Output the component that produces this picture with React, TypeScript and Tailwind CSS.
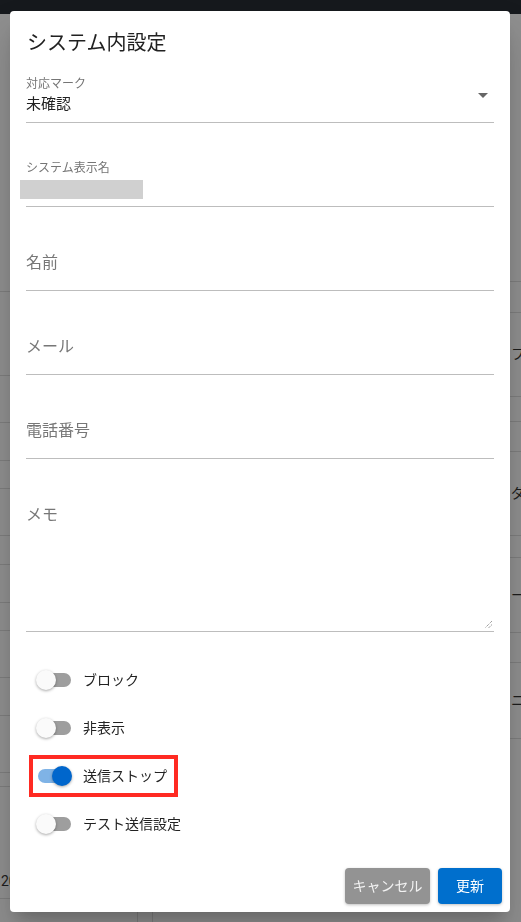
import { useState } from 'react';

const leftRows = [
  'h-[278px]', 'h-[84px]', 'h-[47px]', 'h-[38px]', 'h-[28px]', 'h-[47px]', 'h-[29px]',
  'h-[38px]', 'h-[28px]', 'h-[47px]', 'h-[38px]', 'h-[57px]', 'h-[14px]', 'h-[112px]',
];

const rightRows: { h: string; text?: string }[] = [
  { h: 'h-[268px]' },
  { h: 'h-[31px]' },
  { h: 'h-[84px]', text: 'フォーム' },
  { h: 'h-[25px]' },
  { h: 'h-[30px]' },
  { h: 'h-[84px]', text: 'ダイレクト' },
  { h: 'h-[22px]' },
  { h: 'h-[75px]', text: 'ーム' },
  { h: 'h-[30px]' },
  { h: 'h-[76px]', text: 'ニュース' },
];

function Background() {
  return (
    <div className="min-h-screen bg-[#8f8f8f]">
      <div className="h-[14px] bg-[#16191d]" />
      <div className="flex h-[908px]">
        <div className="w-[138px] border-r border-[#7d7d7d]">
          {leftRows.map((h, i) => (
            <div key={i} className={`${h} border-b border-[#7d7d7d] flex items-end`}>
              {i === leftRows.length - 1 && (
                <span className="pl-[1px] pb-[6px] text-[14px] text-[#1c1c1c]">2020/01/01</span>
              )}
            </div>
          ))}
        </div>
        <div className="w-[15px] border-r border-[#7d7d7d]" />
        <div className="flex-1 overflow-hidden">
          {rightRows.map((r, i) => (
            <div key={i} className={`${r.h} border-b border-[#7d7d7d] flex items-center`}>
              {r.text && (
                <span className="ml-[358px] whitespace-nowrap text-[14px] text-[#1c1c1c]">{r.text}</span>
              )}
            </div>
          ))}
        </div>
      </div>
    </div>
  );
}

function Toggle({ label, checked, onChange, marked }: {
  label: string;
  checked: boolean;
  onChange: () => void;
  marked?: boolean;
}) {
  return (
    <div className="relative h-[48px] flex items-center">
      <button onClick={onChange} className="relative w-[57px] h-[38px] shrink-0">
        <span
          className={`absolute left-[12px] top-[12px] w-[33px] h-[14px] rounded-full ${
            checked ? 'bg-[#7fb3e6]' : 'bg-[#9e9e9e]'
          }`}
        />
        <span
          className={`absolute top-[9px] w-[20px] h-[20px] rounded-full shadow-[0_1px_3px_rgba(0,0,0,0.35)] ${
            checked ? 'left-[26px] bg-[#0066cc]' : 'left-[10px] bg-[#fafafa]'
          }`}
        />
      </button>
      <span className="text-[14px] text-[#222]">{label}</span>
      {marked && (
        <div className="absolute left-[3px] top-[3px] w-[149px] h-[42px] border-[4px] border-[#ff2a22]" />
      )}
    </div>
  );
}

export default function App() {
  const [toggles, setToggles] = useState({ block: false, hidden: false, stop: true, test: false });
  const flip = (k: keyof typeof toggles) => setToggles({ ...toggles, [k]: !toggles[k] });

  return (
    <div className="relative font-[Roboto,'Noto_Sans_CJK_JP',sans-serif]">
      <Background />

      <div className="fixed inset-0 pl-[10px] pt-[11px]">
        <div className="w-[500px] h-[901px] bg-white rounded-[4px] shadow-[0_11px_15px_-7px_rgba(0,0,0,0.2),0_24px_38px_3px_rgba(0,0,0,0.14)] flex flex-col">
          <h2 className="px-[17px] pt-[16px] h-[48px] text-[20px] leading-[32px] text-[#212121]">
            システム内設定
          </h2>

          <div className="px-[16px] flex-1">
            {/* 対応マーク */}
            <div className="mt-[18px] pb-[8px] border-b border-[#bdbdbd]">
              <div className="h-[14px] text-[12px] leading-[14px] text-[#757575]">対応マーク</div>
              <div className="relative mt-[3px] h-[20px] text-[15px] leading-[20px] text-[#212121]">
                未確認
                <svg viewBox="0 0 24 24" className="absolute right-[-1px] top-[-11px] w-[24px] h-[24px]">
                  <path d="M7 10l5 5 5-5z" fill="#666" />
                </svg>
              </div>
            </div>

            {/* システム表示名 */}
            <div className="mt-[38px] pb-[7px] border-b border-[#bdbdbd]">
              <div className="h-[14px] text-[12px] leading-[14px] text-[#757575]">システム表示名</div>
              <div className="mt-[5px] -ml-[6px] w-[123px] h-[19px] bg-[#d0d0d0]" />
            </div>

            {['名前', 'メール', '電話番号'].map((p) => (
              <div key={p} className="mt-[44px] pb-[15px] border-b border-[#bdbdbd]">
                <div className="h-[24px] text-[16px] leading-[24px] text-[#777]">{p}</div>
              </div>
            ))}

            {/* メモ */}
            <div className="relative mt-[44px] pb-[104px] border-b border-[#bdbdbd]">
              <div className="h-[24px] text-[16px] leading-[24px] text-[#777]">メモ</div>
              <svg viewBox="0 0 9 9" className="absolute right-[1px] bottom-[2px] w-[9px] h-[9px]">
                <path d="M8 1L1 8M8 4.5L4.5 8" stroke="#777" strokeWidth="1" strokeDasharray="1 1" />
              </svg>
            </div>

            <div className="mt-[24px]">
              <Toggle label="ブロック" checked={toggles.block} onChange={() => flip('block')} />
              <Toggle label="非表示" checked={toggles.hidden} onChange={() => flip('hidden')} />
              <Toggle label="送信ストップ" checked={toggles.stop} onChange={() => flip('stop')} marked />
              <Toggle label="テスト送信設定" checked={toggles.test} onChange={() => flip('test')} />
            </div>
          </div>

          <div className="flex justify-end gap-[8px] p-[8px]">
            <button className="w-[85px] h-[36px] rounded-[4px] bg-[#939393] text-[14px] text-[#f2f2f2] shadow-[0_1px_3px_rgba(0,0,0,0.25)]">
              キャンセル
            </button>
            <button className="w-[64px] h-[36px] rounded-[4px] bg-[#006fcd] text-[14px] text-white shadow-[0_1px_3px_rgba(0,0,0,0.25)]">
              更新
            </button>
          </div>
        </div>
      </div>
    </div>
  );
}
